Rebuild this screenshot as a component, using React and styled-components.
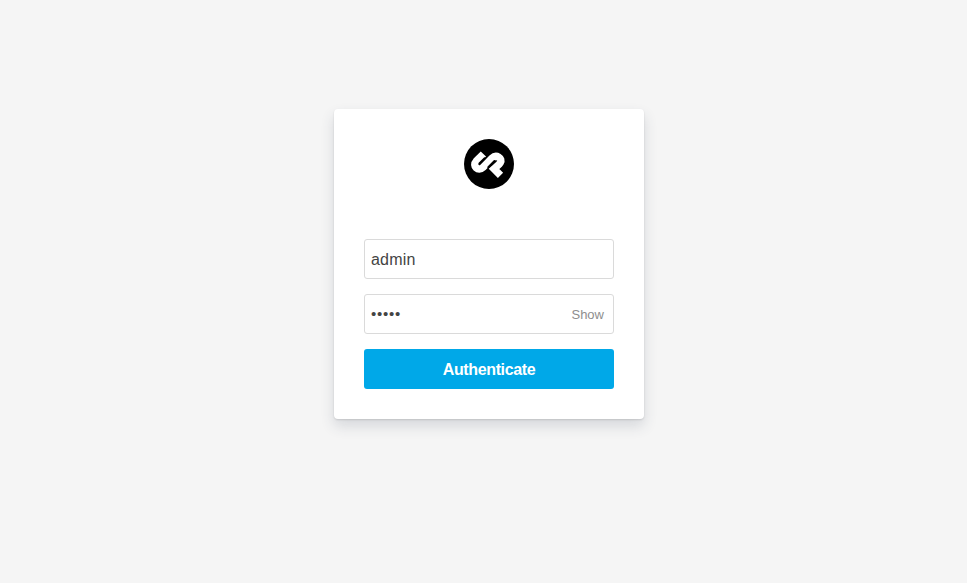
import React from "react";
import styled, { createGlobalStyle } from "styled-components";

const GlobalStyle = createGlobalStyle`
  * { box-sizing: border-box; }
  body {
    margin: 0;
    background: #f5f5f5;
    font-family: "Liberation Sans", Arial, sans-serif;
  }
`;

const Page = styled.main`
  display: flex;
  justify-content: center;
  align-items: flex-start;
  min-height: 100vh;
  padding: 109px 0 0 11px;
`;

const Card = styled.form`
  display: flex;
  flex-direction: column;
  width: 310px;
  height: 310px;
  padding: 30px;
  background: #fff;
  border-radius: 4px;
  box-shadow: 0 1px 2px rgba(0, 0, 0, 0.12), 0 7px 14px rgba(50, 60, 90, 0.16);
`;

const Logo = styled.svg`
  display: block;
  width: 50px;
  height: 50px;
  margin: 0 auto 50px;
`;

const Field = styled.div`
  display: flex;
  align-items: center;
  height: 40px;
  margin-bottom: 15px;
  padding: 2px 9px 0 6px;
  background: #fff;
  border: 1px solid #dadada;
  border-radius: 3px;
`;

const Value = styled.span`
  flex: 1;
  color: #444;
  font-size: ${(p) => (p.$masked ? "15px" : "16px")};
  line-height: 20px;
  letter-spacing: ${(p) => (p.$masked ? "0.75px" : "0.2px")};
  padding-bottom: ${(p) => (p.$masked ? "2px" : "0")};
`;

const Toggle = styled.button`
  padding: 0;
  border: 0;
  background: none;
  color: #8e8e8e;
  font: 13px/20px "Liberation Sans", Arial, sans-serif;
`;

const Submit = styled.button`
  height: 40px;
  padding: 2px 0 0;
  border: 0;
  border-radius: 3px;
  background: #00a8e8;
  color: #fff;
  font: bold 16px/38px "Liberation Sans", Arial, sans-serif;
  letter-spacing: -0.37px;
`;

export default function App() {
  return (
    <>
      <GlobalStyle />
      <Page>
        <Card>
          <Logo viewBox="0 0 50 50">
            <circle cx="25" cy="25" r="25" />
            <path
              d="M19.4 15 L12.2 22.2 C7.8 26.8 14.3 33 19 28.4 L28.1 19.2 C32.1 15.2 39.2 19 36.2 23.9 C35.2 25.6 32.6 27.4 30 29.9 L36.5 36.4"
              fill="none"
              stroke="#fff"
              strokeWidth="7.4"
            />
            <path
              d="M20.7 19.2 L15.4 24.5 M24.3 28.2 L30.5 22"
              fill="none"
              stroke="#000"
              strokeWidth="2"
              strokeLinecap="round"
            />
          </Logo>
          <Field>
            <Value>admin</Value>
          </Field>
          <Field>
            <Value $masked>•••••</Value>
            <Toggle type="button">Show</Toggle>
          </Field>
          <Submit type="button">Authenticate</Submit>
        </Card>
      </Page>
    </>
  );
}
